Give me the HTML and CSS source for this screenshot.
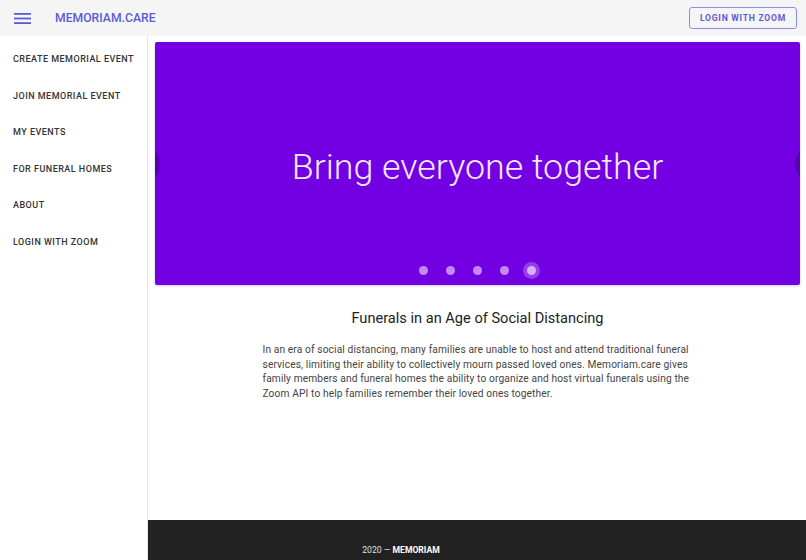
FILE: index.html
```
<!DOCTYPE html>
<html>
<head>
  <title>Memoriam.care</title>
  <link rel="stylesheet" href="styles.css">
</head>
<body>
  <div class="app">
    <header class="topbar">
      <button class="menu-btn" aria-label="menu">
        <svg width="17" height="11" viewBox="0 0 17 11"><rect x="0" y="0" width="17" height="1.8"/><rect x="0" y="4.6" width="17" height="1.8"/><rect x="0" y="9.2" width="17" height="1.8"/></svg>
      </button>
      <div class="brand">MEMORIAM.CARE</div>
      <button class="login-btn">LOGIN WITH ZOOM</button>
    </header>

    <div class="layout">
      <nav class="sidebar">
        <ul>
          <li>CREATE MEMORIAL EVENT</li>
          <li>JOIN MEMORIAL EVENT</li>
          <li>MY EVENTS</li>
          <li>FOR FUNERAL HOMES</li>
          <li>ABOUT</li>
          <li>LOGIN WITH ZOOM</li>
        </ul>
      </nav>

      <main class="main">
        <div class="content">
          <div class="carousel">
            <span class="arrow prev"></span>
            <span class="arrow next"></span>
            <h1>Bring everyone together</h1>
            <div class="dots">
              <span class="dot"></span>
              <span class="dot"></span>
              <span class="dot"></span>
              <span class="dot"></span>
              <span class="dot active"></span>
            </div>
          </div>

          <section class="intro">
            <h2>Funerals in an Age of Social Distancing</h2>
            <p>In an era of social distancing, many families are unable to host and attend traditional funeral services, limiting their ability to collectively mourn passed loved ones. Memoriam.care gives family members and funeral homes the ability to organize and host virtual funerals using the Zoom API to help families remember their loved ones together.</p>
          </section>
        </div>

        <footer class="footer">
          <span>2020 — <strong>MEMORIAM</strong></span>
        </footer>
      </main>
    </div>
  </div>
</body>
</html>
```

FILE: styles.css
```
body {
  margin: 0;
  font-family: Roboto, "Liberation Sans", Arial, sans-serif;
  background-color: #fff;
}

.app {
  height: 560px;
  overflow: hidden;
  display: flex;
  flex-direction: column;
}

.topbar {
  height: 36px;
  flex-shrink: 0;
  display: flex;
  align-items: center;
  background-color: #f5f5f5;
  padding: 0 9px 0 14px;
}

.menu-btn {
  background: none;
  border: none;
  padding: 0;
  width: 17px;
  height: 11px;
  margin-top: 1px;
  fill: #5b5bd9;
  cursor: pointer;
}

.menu-btn svg {
  display: block;
}

.brand {
  margin-left: 24px;
  font-size: 12.2px;
  font-weight: 500;
  color: #5b5bd9;
}

.login-btn {
  margin-left: auto;
  height: 22px;
  padding: 0 10px;
  background: none;
  border: 1px solid #8c8ce6;
  border-radius: 3px;
  color: #5b5bd9;
  font-family: Roboto, "Liberation Sans", Arial, sans-serif;
  font-size: 8.6px;
  font-weight: 700;
  letter-spacing: 0.75px;
  cursor: pointer;
}

.layout {
  flex: 1;
  display: flex;
  min-height: 0;
}

.sidebar {
  width: 147px;
  flex-shrink: 0;
  border-right: 1px solid #e6e6e6;
  background-color: #fff;
}

.sidebar ul {
  list-style-type: none;
  margin: 0;
  padding: 5px 0 0;
}

.sidebar li {
  height: 36.5px;
  line-height: 36.5px;
  padding-left: 13px;
  font-size: 9px;
  font-weight: 500;
  letter-spacing: 0.48px;
  color: #333;
  white-space: nowrap;
}

.main {
  flex: 1;
  display: flex;
  flex-direction: column;
  min-width: 0;
}

.content {
  flex: 1;
  padding: 6px 6px 0 7px;
}

.carousel {
  position: relative;
  overflow: hidden;
  height: 243px;
  background-color: #7200e2;
  border-radius: 2px;
  display: flex;
  flex-direction: column;
  align-items: center;
  box-shadow: 0 1px 3px rgba(0, 0, 0, 0.2);
}

.carousel h1 {
  margin: 0;
  padding-top: 103px;
  font-size: 35.8px;
  font-weight: 300;
  line-height: 44px;
  color: #f3e8ff;
}

.arrow {
  position: absolute;
  top: 104px;
  width: 36px;
  height: 36px;
  border-radius: 50%;
  background-color: rgba(40, 0, 90, 0.35);
}

.arrow.prev {
  left: -31px;
}

.arrow.next {
  right: -31px;
}

.dots {
  display: flex;
  align-items: center;
  gap: 18px;
  margin-top: auto;
  margin-bottom: 7px;
  height: 16px;
}

.dot {
  width: 9px;
  height: 9px;
  border-radius: 50%;
  background-color: #c58af2;
}

.dot.active {
  background-color: #d7b0f6;
  box-shadow: 0 0 0 4px rgba(215, 176, 246, 0.35);
}

.intro {
  width: 430px;
  margin: 0 auto;
  padding-top: 24px;
}

.intro h2 {
  margin: 0 0 16px;
  text-align: center;
  font-size: 14.6px;
  font-weight: 400;
  color: #222;
}

.intro p {
  margin: 0;
  font-size: 10.2px;
  line-height: 14.6px;
  color: #444;
  letter-spacing: 0.12px;
}

.footer {
  height: 40px;
  flex-shrink: 0;
  background-color: #212121;
  display: flex;
  justify-content: center;
  align-items: flex-start;
  padding: 25px 152px 0 0;
  box-sizing: border-box;
  color: #e0e0e0;
  font-size: 8.6px;
}

.footer strong {
  color: #fff;
}
```
